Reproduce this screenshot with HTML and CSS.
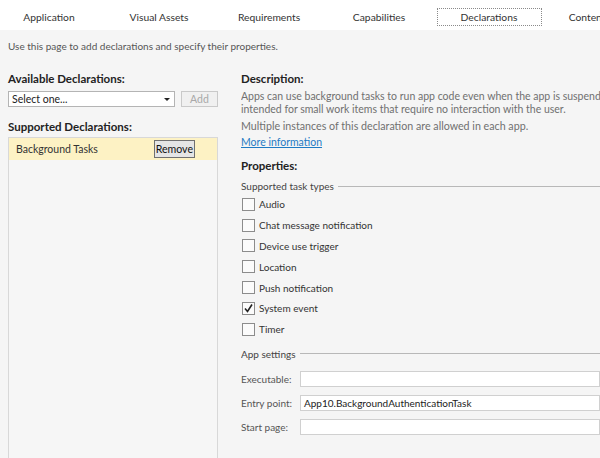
FILE: index.html
```html
<!DOCTYPE html>
<html>
<head>
<meta charset="utf-8">
<link rel="stylesheet" href="styles.css">
</head>
<body>
<div class="tabs">
  <div class="tab"><span>Application</span></div>
  <div class="tab"><span>Visual Assets</span></div>
  <div class="tab"><span>Requirements</span></div>
  <div class="tab"><span>Capabilities</span></div>
  <div class="tab active"><span>Declarations</span></div>
  <div class="tab"><span>Content URIs</span></div>
</div>
<div class="page">
  <div class="intro">Use this page to add declarations and specify their properties.</div>
  <div class="cols">
    <div class="left">
      <div class="heading">Available Declarations:</div>
      <div class="pick-row">
        <div class="select"><span>Select one...</span><span class="arrow"></span></div>
        <div class="btn disabled">Add</div>
      </div>
      <div class="heading h2">Supported Declarations:</div>
      <div class="listbox">
        <div class="list-item selected">
          <span>Background Tasks</span>
          <div class="btn remove">Remove</div>
        </div>
      </div>
    </div>
    <div class="right">
      <div class="heading">Description:</div>
      <p class="desc">Apps can use background tasks to run app code even when the app is suspended. Background tasks are intended for small work items that require no interaction with the user.</p>
      <p class="desc2">Multiple instances of this declaration are allowed in each app.</p>
      <a class="link" href="#">More information</a>
      <div class="heading props">Properties:</div>
      <div class="group">Supported task types</div>
      <div class="checks">
        <div class="check"><span class="box"></span>Audio</div>
        <div class="check"><span class="box"></span>Chat message notification</div>
        <div class="check"><span class="box"></span>Device use trigger</div>
        <div class="check"><span class="box"></span>Location</div>
        <div class="check"><span class="box"></span>Push notification</div>
        <div class="check"><span class="box checked"><svg width="11" height="11" viewBox="0 0 11 11"><path d="M2 5.5 L4.5 8.5 L9 1.5" fill="none" stroke="#222" stroke-width="1.6"/></svg></span>System event</div>
        <div class="check"><span class="box"></span>Timer</div>
      </div>
      <div class="group settings">App settings</div>
      <div class="fields">
        <div class="field"><label>Executable:</label><div class="input"></div></div>
        <div class="field"><label>Entry point:</label><div class="input">App10.BackgroundAuthenticationTask</div></div>
        <div class="field"><label>Start page:</label><div class="input"></div></div>
      </div>
    </div>
  </div>
</div>
</body>
</html>
```
FILE: styles.css
```css
html, body {
  margin: 0;
  padding: 0;
  height: 100%;
  overflow: hidden;
}
body {
  font-family: "Lato", "Open Sans", sans-serif;
  font-size: 10px;
  color: #333;
  background: #f5f5f5;
}
.tabs {
  height: 27px;
  padding-top: 3px;
  background: #fff;
  display: flex;
  margin-left: -6px;
  white-space: nowrap;
  overflow: hidden;
}
.tab {
  flex: 0 0 110px;
  display: flex;
  align-items: center;
  justify-content: center;
  font-size: 10.3px;
}
.tab span {
  display: block;
  line-height: 16px;
}
.tab.active span {
  width: 103px;
  height: 16px;
  text-align: center;
  border: 1px dotted #8a8a8a;
}
.page {
  padding: 0 0 0 8px;
}
.intro {
  line-height: 16px;
  padding-top: 8px;
  color: #555;
}
.cols {
  display: flex;
  margin-top: 16px;
}
.left {
  flex: 0 0 207px;
}
.right {
  margin-left: 23px;
  flex: 1;
  min-width: 0;
  white-space: nowrap;
  overflow: hidden;
}
.heading {
  font-weight: bold;
  font-size: 11.5px;
  line-height: 18px;
  color: #222;
}
.pick-row {
  display: flex;
  margin-top: 3px;
  gap: 6px;
}
.select {
  height: 14px;
  background: #fff;
  border: 1px solid #b4b4b4;
  display: flex;
  align-items: center;
  justify-content: space-between;
  padding: 0 4px 0 3px;
  width: 158px;
  color: #222;
  font-size: 10.5px;
}
.arrow {
  width: 0;
  height: 0;
  border-left: 3px solid transparent;
  border-right: 3px solid transparent;
  border-top: 3px solid #222;
}
.btn {
  height: 14px;
  line-height: 14px;
  border: 1px solid #c9c9c9;
  background: #f0f0f0;
  padding: 0 8px;
}
.btn.disabled {
  color: #a8a8a8;
  width: 19px;
  text-align: center;
  font-size: 10.5px;
}
.h2 {
  margin-top: 11px;
}
.listbox {
  margin-top: 1px;
  height: 340px;
  border: 1px solid #d8d8d8;
  background: #f6f6f6;
}
.list-item {
  height: 22px;
  display: flex;
  align-items: center;
  justify-content: space-between;
  padding: 0 22px 0 7px;
  font-size: 10.5px;
}
.list-item.selected {
  background: #fdf2c4;
}
.remove {
  height: 16px;
  line-height: 16px;
  border: 1px solid #707070;
  background: #e5e5e5;
  padding: 0 1px;
  color: #111;
  font-size: 10.6px;
}
.desc {
  margin: 2px 0 0;
  line-height: 13px;
  color: #707070;
  white-space: normal;
  width: 490px;
  font-size: 10.5px;
}
.desc2 {
  margin: 2px 0 0;
  line-height: 16px;
  color: #707070;
  font-size: 10.7px;
}
.link {
  display: block;
  width: max-content;
  line-height: 16px;
  color: #1f7bc4;
  text-decoration: underline;
  font-size: 10.5px;
}
.props {
  margin-top: 7px;
}
.group {
  margin-top: 3px;
  line-height: 16px;
  display: flex;
  align-items: center;
  color: #444;
}
.group::after {
  content: "";
  flex: 1;
  height: 1px;
  background: #b8b8b8;
  margin-left: 4px;
}
.checks {
  display: flex;
  flex-direction: column;
}
.check {
  height: 20.8px;
  display: flex;
  align-items: center;
  color: #333;
}
.box {
  width: 11px;
  height: 11px;
  border: 1px solid #8c8c8c;
  background: #fbfbfb;
  margin: 0 4px 0 1px;
  display: flex;
  align-items: center;
  justify-content: center;
}
.settings {
  margin-top: 6px;
}
.fields {
  margin-top: 5px;
}
.field {
  height: 24.3px;
  display: flex;
  align-items: center;
}
.field label {
  flex: 0 0 59px;
  color: #555;
}
.input {
  flex: 1;
  height: 14px;
  line-height: 14px;
  background: #fff;
  border: 1px solid #d0d0d0;
  padding: 0 3px;
  color: #222;
}
```
